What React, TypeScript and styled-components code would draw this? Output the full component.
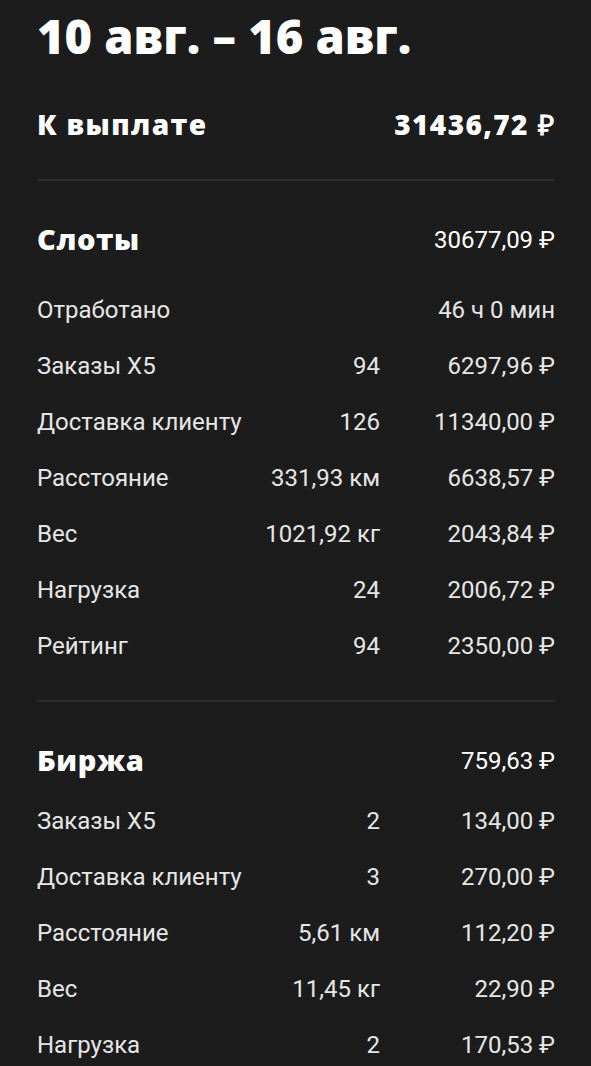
import React from 'react';
import styled, { createGlobalStyle } from 'styled-components';

const GlobalStyle = createGlobalStyle`
    html, body {
        margin: 0;
        padding: 0;
        background: #1c1c1c;
    }
`;

const Page = styled.div`
    min-height: 1066px;
    background: #1c1c1c;
    padding: 0 36px 0 37px;
    box-sizing: border-box;
    color: #ececec;
    font-family: Roboto, 'Noto Sans', sans-serif;
`;

const Title = styled.h1`
    margin: 0;
    height: 76px;
    padding-bottom: 4px;
    box-sizing: border-box;
    display: flex;
    align-items: center;
    font-family: 'Open Sans', sans-serif;
    font-weight: 800;
    font-size: 47px;
    line-height: 52px;
    color: #ffffff;
`;

const TotalRow = styled.div`
    display: flex;
    justify-content: space-between;
    align-items: center;
    padding: 32px 0 39px;
    line-height: 32px;
    font-family: 'Open Sans', sans-serif;
    font-weight: 800;
    font-size: 28px;
    letter-spacing: 1.4px;
    color: #ffffff;
    border-bottom: 2px solid #2b2b2b;
`;

const Section = styled.section<{ $last?: boolean }>`
    padding: 27px 0 26px;
    border-bottom: ${(p) => (p.$last ? 'none' : '2px solid #2b2b2b')};
`;

const SectionHead = styled.div<{ $gap?: number }>`
    display: flex;
    justify-content: space-between;
    align-items: center;
    height: 64px;
    margin-bottom: ${(p) => p.$gap ?? 0}px;
`;

const SectionName = styled.div`
    padding-bottom: 4px;
    font-family: 'Open Sans', sans-serif;
    font-weight: 800;
    font-size: 29px;
    letter-spacing: 0.6px;
    color: #ffffff;
`;

const SectionSum = styled.div`
    font-size: 24px;
    color: #ffffff;
`;

const Row = styled.div`
    display: grid;
    grid-template-columns: 1fr auto 175px;
    align-items: center;
    height: 56px;
    font-size: 24px;
    color: #e6e6e6;
`;

const Qty = styled.div`
    text-align: right;
`;

const Amount = styled.div`
    text-align: right;
`;

type Line = { label: string; qty?: string; amount: string };

const slots: Line[] = [
    { label: 'Отработано', amount: '46 ч 0 мин' },
    { label: 'Заказы X5', qty: '94', amount: '6297,96 ₽' },
    { label: 'Доставка клиенту', qty: '126', amount: '11340,00 ₽' },
    { label: 'Расстояние', qty: '331,93 км', amount: '6638,57 ₽' },
    { label: 'Вес', qty: '1021,92 кг', amount: '2043,84 ₽' },
    { label: 'Нагрузка', qty: '24', amount: '2006,72 ₽' },
    { label: 'Рейтинг', qty: '94', amount: '2350,00 ₽' },
];

const exchange: Line[] = [
    { label: 'Заказы X5', qty: '2', amount: '134,00 ₽' },
    { label: 'Доставка клиенту', qty: '3', amount: '270,00 ₽' },
    { label: 'Расстояние', qty: '5,61 км', amount: '112,20 ₽' },
    { label: 'Вес', qty: '11,45 кг', amount: '22,90 ₽' },
    { label: 'Нагрузка', qty: '2', amount: '170,53 ₽' },
];

const Lines = ({ items }: { items: Line[] }) => (
    <>
        {items.map((l) => (
            <Row key={l.label}>
                <div>{l.label}</div>
                <Qty>{l.qty}</Qty>
                <Amount>{l.amount}</Amount>
            </Row>
        ))}
    </>
);

const App = () => (
    <Page>
        <GlobalStyle />
        <Title>10 авг. – 16 авг.</Title>
        <TotalRow>
            <span>К выплате</span>
            <span>31436,72 ₽</span>
        </TotalRow>
        <Section>
            <SectionHead $gap={10}>
                <SectionName>Слоты</SectionName>
                <SectionSum>30677,09 ₽</SectionSum>
            </SectionHead>
            <Lines items={slots} />
        </Section>
        <Section $last>
            <SectionHead>
                <SectionName>Биржа</SectionName>
                <SectionSum>759,63 ₽</SectionSum>
            </SectionHead>
            <Lines items={exchange} />
        </Section>
    </Page>
);

export default App;
